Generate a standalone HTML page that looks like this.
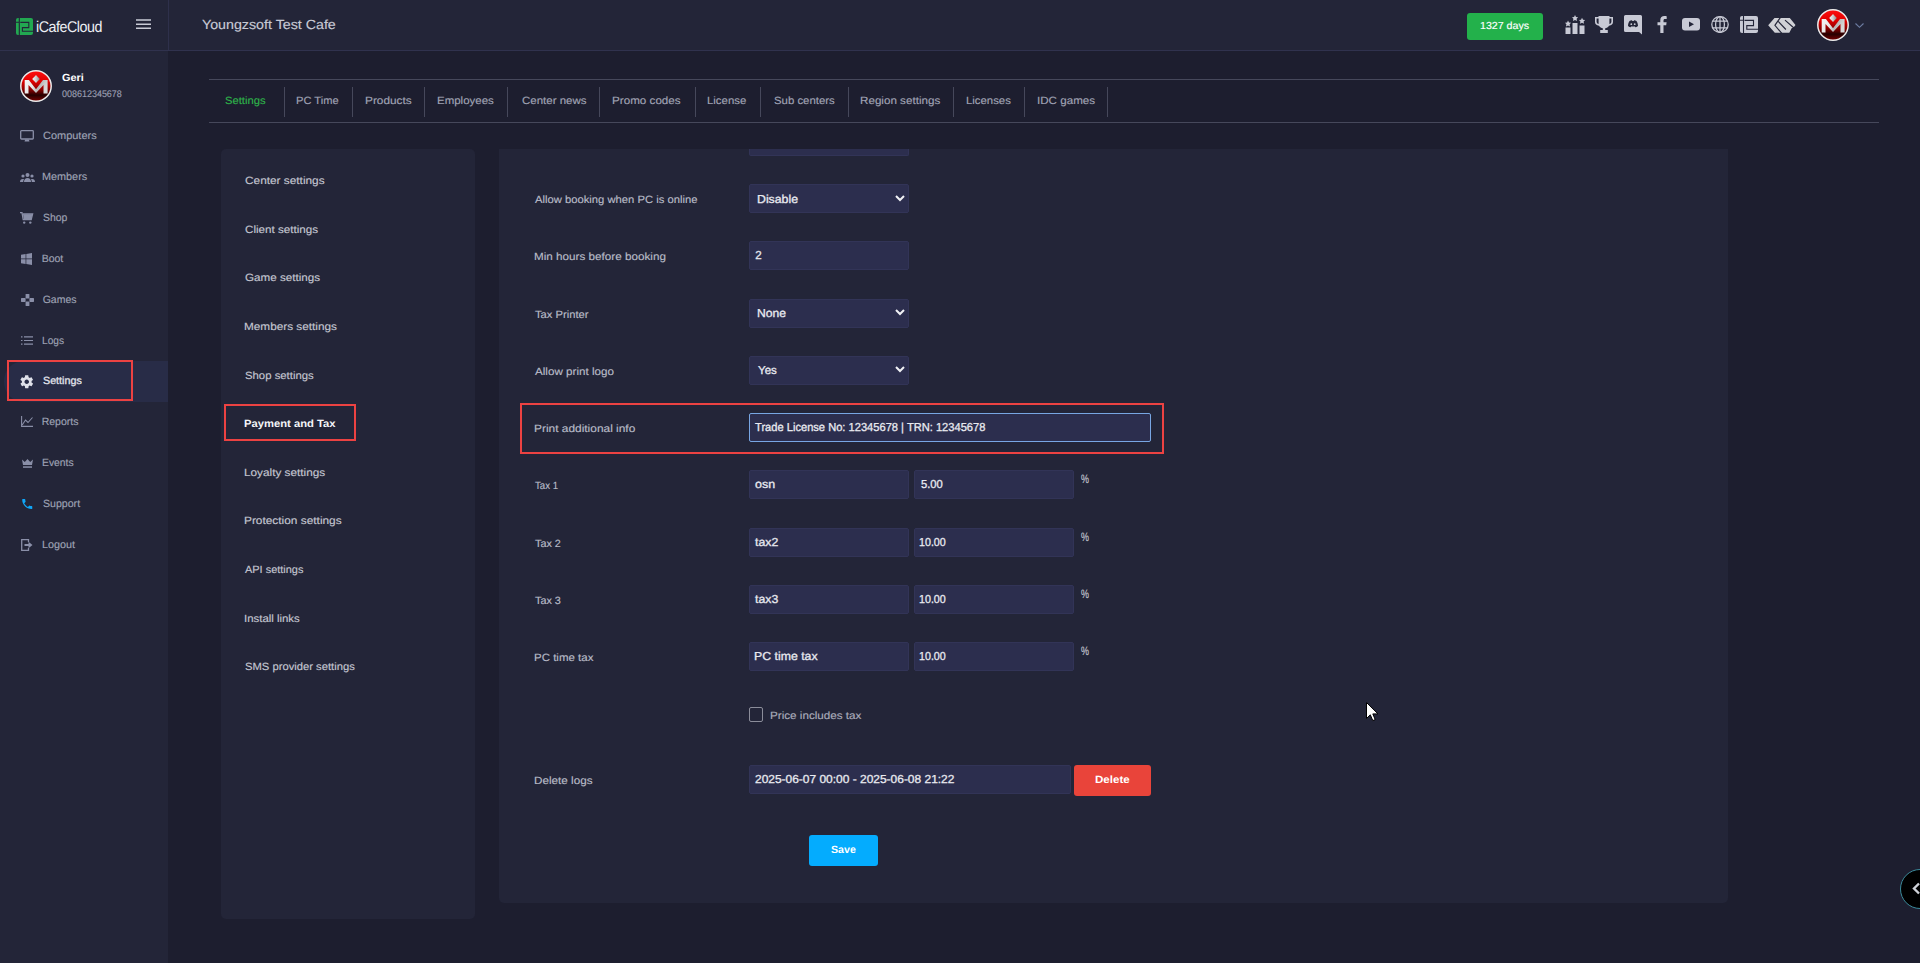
<!DOCTYPE html>
<html><head><meta charset="utf-8"><title>iCafeCloud</title>
<style>
html,body{margin:0;padding:0}
body{width:1920px;height:963px;overflow:hidden;background:#1d1e2f;position:relative;font-family:"Liberation Sans",sans-serif;text-rendering:geometricPrecision}
.a{position:absolute}
.t{position:absolute;white-space:pre;line-height:20px;transform-origin:0 0}
.hdr{left:0;top:0;width:1920px;height:50px;background:#232538;border-bottom:1px solid #30324e}
.vline{left:168px;top:0;width:1px;height:50px;background:#2e304b}
.side{left:0;top:51px;width:168px;height:912px;background:#232538}
.tl{height:1px;background:#46485b}
.ts{width:1px;top:87px;height:30px;background:#46485b}
.card{background:#232538;border-radius:5px}
.inp{background:#2c2e4e;border:1px solid #323457;box-sizing:border-box;border-radius:2px}
.red{border:2px solid #ec4242;box-sizing:border-box}
svg{position:absolute;overflow:visible}
</style></head><body>
<!-- header -->
<div class="a hdr"></div>
<div class="a vline"></div>
<svg style="left:16px;top:18px" width="17" height="17" viewBox="0 0 17 17">
 <rect x="0" y="0" width="17" height="17" rx="2" fill="#22a851"/>
 <path d="M3.3 0V17M0 4.3H3.3M4.3 4.4H12.8V9.6H6.4V13.2H17" stroke="#232538" stroke-width="1.1" fill="none"/>
</svg>
<div class="t" style="left:35.5px;top:17.5px;font-size:15.5px;color:#eef0f4;transform:scaleX(0.92);letter-spacing:-0.5px">iCafeCloud</div>
<svg style="left:136px;top:19px" width="15" height="11" viewBox="0 0 15 11">
 <path d="M0 1H15M0 5.3H15M0 9.3H15" stroke="#c9cbd6" stroke-width="1.6"/>
</svg>
<div class="a" style="left:1467px;top:13px;width:76px;height:27px;background:#23b14b;border-radius:3px"></div>
<!-- header icons -->
<svg style="left:1565px;top:15px" width="20" height="19" viewBox="0 0 20 19">
 <g fill="#c8cad5">
 <rect x="0.5" y="12.5" width="5" height="6.5"/><rect x="7.5" y="8" width="5" height="11"/><rect x="14.5" y="10.5" width="5" height="8.5"/>
 <path d="M3 5.5l1 2 2.1.3-1.5 1.5.4 2.1L3 10.4 1 11.4l.4-2.1L0 7.8l2.1-.3z"/>
 <path d="M10 0l1 2 2.1.3-1.5 1.5.4 2.1L10 4.9 8 5.9l.4-2.1L7 2.3l2.1-.3z"/>
 <path d="M17 2.8l1 2 2.1.3-1.5 1.5.4 2.1L17 7.7 15 8.7l.4-2.1L14 5.1l2.1-.3z"/>
 </g>
</svg>
<svg style="left:1595px;top:16px" width="18" height="17" viewBox="0 0 18 17">
 <path fill="#c8cad5" d="M3.5 0H14.5V1H18V6C18 8 16.5 9.5 14 9.8 13.2 11.2 11.5 12 10.2 12.2V14H12.8V17H5.2V14H7.8V12.2C6.5 12 4.8 11.2 4 9.8 1.5 9.5 0 8 0 6V1H3.5ZM1.6 2.6V5.8C1.6 7 2.5 7.8 3.6 8V2.6ZM16.4 2.6H14.4V8C15.5 7.8 16.4 7 16.4 5.8Z"/>
</svg>
<svg style="left:1624px;top:15px" width="18" height="20" viewBox="0 0 18 20">
 <path fill="#c8cad5" d="M1.5 0H16.5A1.5 1.5 0 0 1 18 1.5V19.5L15 17H1.5A1.5 1.5 0 0 1 0 15.5V1.5A1.5 1.5 0 0 1 1.5 0Z"/>
 <path fill="#232538" d="M5.5 6C6.8 5.2 7.8 5.1 8 5.4L8.3 5.9H9.7L10 5.4C10.2 5.1 11.2 5.2 12.5 6 13.6 7.6 14 9.3 14 11 13 11.8 12 12.2 11.2 12.3L10.7 11.5C11 11.4 11.3 11.2 11.6 11 10 11.7 8 11.7 6.4 11 6.7 11.2 7 11.4 7.3 11.5L6.8 12.3C6 12.2 5 11.8 4 11 4 9.3 4.4 7.6 5.5 6Z"/>
 <circle cx="7.3" cy="9.2" r="0.9" fill="#c8cad5"/><circle cx="10.7" cy="9.2" r="0.9" fill="#c8cad5"/>
</svg>
<svg style="left:1657px;top:16px" width="10" height="17" viewBox="0 0 10 17">
 <path fill="#c8cad5" d="M6.5 17V9.3H9.2L9.6 6.3H6.5V4.4C6.5 3.5 6.8 2.9 8 2.9H9.7V0.2C9.4 0.1 8.4 0 7.3 0 4.9 0 3.3 1.4 3.3 4.1V6.3H0.5V9.3H3.3V17Z"/>
</svg>
<svg style="left:1682px;top:18px" width="18" height="13" viewBox="0 0 18 13">
 <rect x="0" y="0" width="18" height="12.5" rx="3" fill="#c8cad5"/>
 <path d="M7 3.5L12 6.25 7 9Z" fill="#232538"/>
</svg>
<svg style="left:1711px;top:16px" width="18" height="17" viewBox="0 0 18 17">
 <g fill="none" stroke="#c8cad5" stroke-width="1.25">
 <ellipse cx="9" cy="8.5" rx="8.2" ry="7.9"/>
 <ellipse cx="9" cy="8.5" rx="4.4" ry="7.9"/>
 <path d="M1.8 5.2H16.2M1.8 11.8H16.2M9 0.6V16.4"/>
 </g>
</svg>
<svg style="left:1740px;top:16px" width="18" height="17" viewBox="0 0 18 17">
 <rect x="0" y="0" width="18" height="17" rx="2" fill="#c8cad5"/>
 <path d="M3.5 0V17M0 4.3H3.5M4.5 4.4H13.5V9.6H6.8V13.2H18" stroke="#232538" stroke-width="1.1" fill="none"/>
</svg>
<svg style="left:1764px;top:13px" width="36" height="24" viewBox="0 0 36 24">
 <path fill="#d0d1d6" d="M4.2 12.3L10.5 5H25.8L31.5 12 29.2 14.9H27.8L25.3 19.8H10.8Z"/>
 <path d="M16.3 4.6L10.9 12.3 17.8 20.4M14.2 8.3L21.9 16.5M21 7.1L30.2 15.3" stroke="#232538" stroke-width="1.15" fill="none"/>
</svg>
<svg style="left:1817px;top:9px" width="32" height="32" viewBox="0 0 32 32">
 <defs><linearGradient id="rg" x1="0" y1="0" x2="0" y2="1"><stop offset="0" stop-color="#ff1010"/><stop offset="0.35" stop-color="#e00000"/><stop offset="0.62" stop-color="#8a0000"/><stop offset="0.8" stop-color="#250000"/><stop offset="1" stop-color="#7a0000"/></linearGradient>
 <linearGradient id="mg" x1="0" y1="0" x2="1" y2="0.3"><stop offset="0" stop-color="#f4f4f4"/><stop offset="0.45" stop-color="#e8e8e8"/><stop offset="0.7" stop-color="#b8b8b8"/><stop offset="1" stop-color="#d8d8d8"/></linearGradient><linearGradient id="dg" x1="0" y1="0" x2="1" y2="0"><stop offset="0" stop-color="#f6f6f6"/><stop offset="0.5" stop-color="#d0d0d0"/><stop offset="1" stop-color="#888"/></linearGradient></defs>
 <circle cx="16" cy="16" r="15.2" fill="url(#rg)" stroke="#ececec" stroke-width="1.5"/>
 <path d="M4.7 10.1H8.9L16 19.3 23 10.1H27.6V23.6H23.5V15.1L16 23 8.5 15.1V23.6H4.7Z" fill="url(#mg)"/>
 <path d="M16 5L19.8 9 16 13.1 12.2 9Z" fill="url(#dg)"/>
</svg>
<svg style="left:1855px;top:23px" width="9" height="5" viewBox="0 0 9 5">
 <path d="M0.5 0.5L4.5 4.3 8.5 0.5" stroke="#6e7ea3" stroke-width="1.1" fill="none"/>
</svg>

<!-- sidebar -->
<div class="a side"></div>
<svg style="left:20px;top:70px" width="32" height="32" viewBox="0 0 32 32">
 <circle cx="16" cy="16" r="15.2" fill="url(#rg)" stroke="#ececec" stroke-width="1.5"/>
 <path d="M4.7 10.1H8.9L16 19.3 23 10.1H27.6V23.6H23.5V15.1L16 23 8.5 15.1V23.6H4.7Z" fill="url(#mg)"/>
 <path d="M16 5L19.8 9 16 13.1 12.2 9Z" fill="url(#dg)"/>
</svg>
<div class="a" style="left:4px;top:361px;width:164px;height:41px;background:#282c47;border-radius:20px 0 0 20px"></div>
<div class="a red" style="left:7px;top:360px;width:126px;height:41px"></div>
<!-- sidebar icons -->
<svg style="left:20px;top:130px" width="14" height="12" viewBox="0 0 14 12">
 <rect x="0.7" y="0.7" width="12.6" height="8.3" rx="0.8" fill="none" stroke="#8a8fa8" stroke-width="1.3"/>
 <path d="M5.2 9.5H8.8L9.5 11.5H4.5Z" fill="#8a8fa8"/>
</svg>
<svg style="left:20px;top:173px" width="15" height="9" viewBox="0 0 15 9">
 <g fill="#8a8fa8"><circle cx="7.5" cy="2" r="2"/><circle cx="3" cy="3" r="1.6"/><circle cx="12" cy="3" r="1.6"/>
 <path d="M4 9C4 6.5 5.5 5 7.5 5S11 6.5 11 9Z"/><path d="M0 9C0 7.2 1 6 2.8 6 3.4 6 3.8 6.2 4 6.3 3.5 7 3.2 8 3.2 9Z"/><path d="M15 9C15 7.2 14 6 12.2 6 11.6 6 11.2 6.2 11 6.3 11.5 7 11.8 8 11.8 9Z"/></g>
</svg>
<svg style="left:20px;top:212px" width="13" height="12" viewBox="0 0 13 12">
 <path d="M0 0.6H2L3.2 7.6H11.2L12.6 2H3" stroke="#8a8fa8" stroke-width="1.3" fill="none"/>
 <path d="M3 2.2H12.5L11.2 7H3.8Z" fill="#8a8fa8"/>
 <circle cx="4.2" cy="10.6" r="1.2" fill="#8a8fa8"/><circle cx="10.3" cy="10.6" r="1.2" fill="#8a8fa8"/>
</svg>
<svg style="left:21px;top:253px" width="11" height="12" viewBox="0 0 11 12">
 <path fill="#8a8fa8" d="M0 1.8L4.6 1.1V5.6H0ZM5.3 1L11 0V5.6H5.3ZM0 6.3H4.6V10.9L0 10.2ZM5.3 6.3H11V12L5.3 11Z"/>
</svg>
<svg style="left:21px;top:294px" width="13" height="12" viewBox="0 0 13 12">
 <g fill="#8a8fa8"><rect x="4.6" y="0" width="3.8" height="4.5" rx="0.6"/><rect x="4.6" y="7.5" width="3.8" height="4.5" rx="0.6"/><rect x="0" y="4.1" width="4.6" height="3.8" rx="0.6"/><rect x="8.4" y="4.1" width="4.6" height="3.8" rx="0.6"/></g>
</svg>
<svg style="left:21px;top:336px" width="12" height="9" viewBox="0 0 12 9">
 <g stroke="#8a8fa8" stroke-width="1.2"><path d="M0 0.8H1.5M3 0.8H12M0 4.5H1.5M3 4.5H12M0 8.2H1.5M3 8.2H12"/></g>
</svg>
<svg style="left:19.3px;top:373.5px" width="15.5" height="15.5" viewBox="0 0 24 24">
 <path fill="#dfe1ea" d="M19.4 13c.04-.3.1-.65.1-1s-.03-.7-.1-1l2.1-1.65c.2-.15.25-.42.12-.64l-2-3.46c-.12-.22-.4-.3-.6-.22l-2.5 1c-.5-.4-1.1-.7-1.7-1l-.4-2.65c0-.24-.25-.42-.5-.42h-4c-.25 0-.46.18-.5.42l-.37 2.65c-.6.25-1.17.6-1.7 1l-2.5-1c-.22-.08-.48 0-.6.22l-2 3.46c-.13.22-.07.5.12.64L4.57 11c-.04.3-.07.65-.07 1s.03.7.07 1l-2.1 1.65c-.2.15-.25.42-.12.64l2 3.46c.12.22.4.3.6.22l2.5-1c.5.4 1.1.7 1.7 1l.37 2.65c.04.24.25.42.5.42h4c.25 0 .46-.18.5-.42l.37-2.65c.6-.25 1.17-.6 1.7-1l2.5 1c.22.08.48 0 .6-.22l2-3.46c.12-.22.07-.5-.12-.64L19.4 13zM12 15.5c-1.93 0-3.5-1.57-3.5-3.5s1.57-3.5 3.5-3.5 3.5 1.57 3.5 3.5-1.57 3.5-3.5 3.5z"/>
</svg>
<svg style="left:21px;top:416px" width="12" height="11" viewBox="0 0 12 11">
 <path d="M0.6 0V10.4H12M1.2 9L4.5 4 7 6.5 11.5 1.5" stroke="#8a8fa8" stroke-width="1.1" fill="none"/>
</svg>
<svg style="left:21.5px;top:459px" width="11" height="9" viewBox="0 0 11 9">
 <path fill="#8a8fa8" d="M0 0.5L2.8 3 5.5 0 8.2 3 11 0.5 10 6H1Z"/><rect x="1" y="7.3" width="9" height="1.5" fill="#8a8fa8"/>
</svg>
<svg style="left:20.5px;top:497.5px" width="12.5" height="12" viewBox="0 0 24 24">
 <path fill="#10a6f7" d="M6.6 10.8c1.4 2.8 3.8 5.1 6.6 6.6l2.2-2.2c.3-.3.7-.4 1-.2 1.1.4 2.3.6 3.6.6.6 0 1 .4 1 1V20c0 .6-.4 1-1 1C10.6 21 3 13.4 3 4c0-.6.4-1 1-1h3.5c.6 0 1 .4 1 1 0 1.3.2 2.5.6 3.6.1.3 0 .7-.2 1z" transform="translate(-1.5 -1.5) scale(1.12)"/>
</svg>
<svg style="left:21px;top:539px" width="12" height="12" viewBox="0 0 12 12">
 <path d="M7.5 3V0.7H0.7V11.3H7.5V9" stroke="#8a8fa8" stroke-width="1.3" fill="none"/>
 <path fill="#8a8fa8" d="M3.5 5H7.5V2.8L11.5 6 7.5 9.2V7H3.5Z"/>
</svg>

<!-- tabs -->
<div class="a tl" style="left:209px;top:79px;width:1670px"></div>
<div class="a tl" style="left:209px;top:122px;width:1670px"></div>
<div class="a ts" style="left:284px"></div>
<div class="a ts" style="left:352px"></div>
<div class="a ts" style="left:424px"></div>
<div class="a ts" style="left:507px"></div>
<div class="a ts" style="left:599px"></div>
<div class="a ts" style="left:695px"></div>
<div class="a ts" style="left:760px"></div>
<div class="a ts" style="left:848px"></div>
<div class="a ts" style="left:953px"></div>
<div class="a ts" style="left:1024px"></div>
<div class="a ts" style="left:1107px"></div>

<!-- left card -->
<div class="a card" style="left:221px;top:149px;width:254px;height:770px"></div>
<div class="a red" style="left:224px;top:404px;width:132px;height:37px"></div>

<!-- right card -->
<div class="a card" style="left:499px;top:149px;width:1229px;height:754px;border-radius:0 0 5px 5px"></div>
<div class="a inp" style="left:749px;top:149px;width:160px;height:7px;border-top:none;border-radius:0 0 2px 2px"></div>
<div class="a inp" style="left:749px;top:184px;width:160px;height:29px"></div>
<div class="a inp" style="left:749px;top:241px;width:160px;height:29px"></div>
<div class="a inp" style="left:749px;top:299px;width:160px;height:29px"></div>
<div class="a inp" style="left:749px;top:356px;width:160px;height:29px"></div>
<svg style="left:895px;top:195px" width="10" height="7" viewBox="0 0 10 7"><path d="M1 1L5 5 9 1" stroke="#f0f1f5" stroke-width="2" fill="none"/></svg>
<svg style="left:895px;top:309px" width="10" height="7" viewBox="0 0 10 7"><path d="M1 1L5 5 9 1" stroke="#f0f1f5" stroke-width="2" fill="none"/></svg>
<svg style="left:895px;top:366px" width="10" height="7" viewBox="0 0 10 7"><path d="M1 1L5 5 9 1" stroke="#f0f1f5" stroke-width="2" fill="none"/></svg>
<div class="a red" style="left:520px;top:403px;width:644px;height:51px"></div>
<div class="a inp" style="left:749px;top:413px;width:402px;height:29px;border:1px solid #78a6e3"></div>
<div class="a inp" style="left:749px;top:470px;width:160px;height:29px"></div>
<div class="a inp" style="left:914px;top:470px;width:160px;height:29px"></div>
<div class="a inp" style="left:749px;top:528px;width:160px;height:29px"></div>
<div class="a inp" style="left:914px;top:528px;width:160px;height:29px"></div>
<div class="a inp" style="left:749px;top:585px;width:160px;height:29px"></div>
<div class="a inp" style="left:914px;top:585px;width:160px;height:29px"></div>
<div class="a inp" style="left:749px;top:642px;width:160px;height:29px"></div>
<div class="a inp" style="left:914px;top:642px;width:160px;height:29px"></div>
<div class="a" style="left:749px;top:707px;width:14px;height:15px;border:1px solid #8b8d9a;box-sizing:border-box;border-radius:2px"></div>
<div class="a inp" style="left:749px;top:765px;width:322px;height:29px"></div>
<div class="a" style="left:1074px;top:765px;width:77px;height:31px;background:#e9443a;border-radius:3px"></div>
<div class="a" style="left:809px;top:835px;width:69px;height:31px;background:#04acfe;border-radius:3px"></div>

<!-- cursor -->
<svg style="left:1366px;top:702px" width="13" height="20" viewBox="0 0 13 20">
 <path d="M0.5 0.5V16.5L4.3 12.8 6.8 18.6 9.2 17.6 6.8 11.9H12Z" fill="#fff" stroke="#000" stroke-width="1"/>
</svg>
<!-- right floating button -->
<div class="a" style="left:1900px;top:869px;width:40px;height:40px;border-radius:50%;background:#000;border:1px solid #3b8a9a;box-sizing:border-box"></div>
<svg style="left:1911px;top:882px" width="10" height="13" viewBox="0 0 10 13"><path d="M8 1.5L3 6.5 8 11.5" stroke="#d0d2d8" stroke-width="2.4" fill="none"/></svg>

<div class='t' style='left:201.50px;top:15px;font-size:13.2px;color:#c8cad5;-webkit-text-stroke:0.15px currentColor;transform:scaleX(1.0797);'>Youngzsoft Test Cafe</div>
<div class='t' style='left:1479.96px;top:17px;font-size:10.2px;color:#ffffff;-webkit-text-stroke:0.15px currentColor;transform:scaleX(1.0435);'>1327 days</div>
<div class='t' style='left:62.00px;top:69px;font-size:10.4px;color:#ffffff;font-weight:700;transform:scaleX(1.0500);'>Geri</div>
<div class='t' style='left:62.20px;top:85px;font-size:9.6px;color:#9a9db0;-webkit-text-stroke:0.15px currentColor;transform:scaleX(0.9344);'>008612345678</div>
<div class='t' style='left:42.70px;top:126px;font-size:10.5px;color:#9ea2b4;-webkit-text-stroke:0.15px currentColor;transform:scaleX(1.0451);'>Computers</div>
<div class='t' style='left:41.67px;top:167px;font-size:10.5px;color:#9ea2b4;-webkit-text-stroke:0.15px currentColor;transform:scaleX(1.0326);'>Members</div>
<div class='t' style='left:42.70px;top:208px;font-size:10.5px;color:#9ea2b4;-webkit-text-stroke:0.15px currentColor;transform:scaleX(0.9917);'>Shop</div>
<div class='t' style='left:41.70px;top:249px;font-size:10.5px;color:#9ea2b4;-webkit-text-stroke:0.15px currentColor;'>Boot</div>
<div class='t' style='left:42.70px;top:290px;font-size:10.5px;color:#9ea2b4;-webkit-text-stroke:0.15px currentColor;'>Games</div>
<div class='t' style='left:41.73px;top:331px;font-size:10.5px;color:#9ea2b4;-webkit-text-stroke:0.15px currentColor;transform:scaleX(0.9682);'>Logs</div>
<div class='t' style='left:42.70px;top:371px;font-size:10.5px;color:#e2e4ec;-webkit-text-stroke:0.3px currentColor;transform:scaleX(1.0211);'>Settings</div>
<div class='t' style='left:41.70px;top:412px;font-size:10.5px;color:#9ea2b4;-webkit-text-stroke:0.15px currentColor;'>Reports</div>
<div class='t' style='left:41.71px;top:453px;font-size:10.5px;color:#9ea2b4;-webkit-text-stroke:0.15px currentColor;transform:scaleX(0.9871);'>Events</div>
<div class='t' style='left:42.70px;top:494px;font-size:10.5px;color:#9ea2b4;-webkit-text-stroke:0.15px currentColor;transform:scaleX(1.0081);'>Support</div>
<div class='t' style='left:41.67px;top:535px;font-size:10.5px;color:#9ea2b4;-webkit-text-stroke:0.15px currentColor;transform:scaleX(1.0290);'>Logout</div>
<div class='t' style='left:225.20px;top:91px;font-size:10.5px;color:#2eb24a;-webkit-text-stroke:0.15px currentColor;transform:scaleX(1.0684);'>Settings</div>
<div class='t' style='left:296.44px;top:91px;font-size:10.5px;color:#a0a3b4;-webkit-text-stroke:0.15px currentColor;transform:scaleX(1.0590);'>PC Time</div>
<div class='t' style='left:364.68px;top:91px;font-size:10.5px;color:#a0a3b4;-webkit-text-stroke:0.15px currentColor;transform:scaleX(1.1250);'>Products</div>
<div class='t' style='left:437.31px;top:91px;font-size:10.5px;color:#a0a3b4;-webkit-text-stroke:0.15px currentColor;transform:scaleX(1.0941);'>Employees</div>
<div class='t' style='left:521.50px;top:91px;font-size:10.5px;color:#a0a3b4;-webkit-text-stroke:0.15px currentColor;transform:scaleX(1.0949);'>Center news</div>
<div class='t' style='left:612.19px;top:91px;font-size:10.5px;color:#a0a3b4;-webkit-text-stroke:0.15px currentColor;transform:scaleX(1.1098);'>Promo codes</div>
<div class='t' style='left:707.31px;top:91px;font-size:10.5px;color:#a0a3b4;-webkit-text-stroke:0.15px currentColor;transform:scaleX(1.0857);'>License</div>
<div class='t' style='left:773.70px;top:91px;font-size:10.5px;color:#a0a3b4;-webkit-text-stroke:0.15px currentColor;transform:scaleX(1.0839);'>Sub centers</div>
<div class='t' style='left:860.39px;top:91px;font-size:10.5px;color:#a0a3b4;-webkit-text-stroke:0.15px currentColor;transform:scaleX(1.1085);'>Region settings</div>
<div class='t' style='left:966.32px;top:91px;font-size:10.5px;color:#a0a3b4;-webkit-text-stroke:0.15px currentColor;transform:scaleX(1.0825);'>Licenses</div>
<div class='t' style='left:1036.59px;top:91px;font-size:10.5px;color:#a0a3b4;-webkit-text-stroke:0.15px currentColor;transform:scaleX(1.1059);'>IDC games</div>
<div class='t' style='left:244.90px;top:171px;font-size:10.5px;color:#c4c6d1;-webkit-text-stroke:0.15px currentColor;transform:scaleX(1.1271);'>Center settings</div>
<div class='t' style='left:244.90px;top:220px;font-size:10.5px;color:#c4c6d1;-webkit-text-stroke:0.15px currentColor;transform:scaleX(1.1076);'>Client settings</div>
<div class='t' style='left:244.90px;top:268px;font-size:10.5px;color:#c4c6d1;-webkit-text-stroke:0.15px currentColor;transform:scaleX(1.1088);'>Game settings</div>
<div class='t' style='left:243.78px;top:317px;font-size:10.5px;color:#c4c6d1;-webkit-text-stroke:0.15px currentColor;transform:scaleX(1.1220);'>Members settings</div>
<div class='t' style='left:244.90px;top:366px;font-size:10.5px;color:#c4c6d1;-webkit-text-stroke:0.15px currentColor;transform:scaleX(1.0797);'>Shop settings</div>
<div class='t' style='left:243.83px;top:414px;font-size:10.5px;color:#f4f5f8;font-weight:700;transform:scaleX(1.0702);'>Payment and Tax</div>
<div class='t' style='left:243.78px;top:463px;font-size:10.5px;color:#c4c6d1;-webkit-text-stroke:0.15px currentColor;transform:scaleX(1.1211);'>Loyalty settings</div>
<div class='t' style='left:243.77px;top:511px;font-size:10.5px;color:#c4c6d1;-webkit-text-stroke:0.15px currentColor;transform:scaleX(1.1306);'>Protection settings</div>
<div class='t' style='left:244.90px;top:560px;font-size:10.5px;color:#c4c6d1;-webkit-text-stroke:0.15px currentColor;transform:scaleX(1.0429);'>API settings</div>
<div class='t' style='left:243.81px;top:609px;font-size:10.5px;color:#c4c6d1;-webkit-text-stroke:0.15px currentColor;transform:scaleX(1.0860);'>Install links</div>
<div class='t' style='left:244.90px;top:657px;font-size:10.5px;color:#c4c6d1;-webkit-text-stroke:0.15px currentColor;transform:scaleX(1.0689);'>SMS provider settings</div>
<div class='t' style='left:535.30px;top:190px;font-size:10.5px;color:#b8bbc7;-webkit-text-stroke:0.15px currentColor;transform:scaleX(1.0704);'>Allow booking when PC is online</div>
<div class='t' style='left:534.19px;top:247px;font-size:10.5px;color:#b8bbc7;-webkit-text-stroke:0.15px currentColor;transform:scaleX(1.1137);'>Min hours before booking</div>
<div class='t' style='left:535.30px;top:305px;font-size:10.5px;color:#b8bbc7;-webkit-text-stroke:0.15px currentColor;transform:scaleX(1.0660);'>Tax Printer</div>
<div class='t' style='left:535.30px;top:362px;font-size:10.5px;color:#b8bbc7;-webkit-text-stroke:0.15px currentColor;transform:scaleX(1.1085);'>Allow print logo</div>
<div class='t' style='left:534.17px;top:419px;font-size:10.5px;color:#b8bbc7;-webkit-text-stroke:0.15px currentColor;transform:scaleX(1.1341);'>Print additional info</div>
<div class='t' style='left:535.30px;top:476px;font-size:10.5px;color:#b8bbc7;-webkit-text-stroke:0.15px currentColor;transform:scaleX(0.9160);'>Tax 1</div>
<div class='t' style='left:535.30px;top:534px;font-size:10.5px;color:#b8bbc7;-webkit-text-stroke:0.15px currentColor;transform:scaleX(1.0320);'>Tax 2</div>
<div class='t' style='left:535.30px;top:591px;font-size:10.5px;color:#b8bbc7;-webkit-text-stroke:0.15px currentColor;transform:scaleX(1.0320);'>Tax 3</div>
<div class='t' style='left:534.21px;top:648px;font-size:10.5px;color:#b8bbc7;-webkit-text-stroke:0.15px currentColor;transform:scaleX(1.0943);'>PC time tax</div>
<div class='t' style='left:534.18px;top:771px;font-size:10.5px;color:#b8bbc7;-webkit-text-stroke:0.15px currentColor;transform:scaleX(1.1157);'>Delete logs</div>
<div class='t' style='left:757.14px;top:190px;font-size:11.6px;color:#e9eaf0;-webkit-text-stroke:0.3px currentColor;transform:scaleX(1.0605);'>Disable</div>
<div class='t' style='left:755.20px;top:246px;font-size:11.6px;color:#e9eaf0;-webkit-text-stroke:0.3px currentColor;'>2</div>
<div class='t' style='left:757.15px;top:304px;font-size:11.6px;color:#e9eaf0;-webkit-text-stroke:0.3px currentColor;transform:scaleX(1.0481);'>None</div>
<div class='t' style='left:758.20px;top:361px;font-size:11.6px;color:#e9eaf0;-webkit-text-stroke:0.3px currentColor;transform:scaleX(0.9947);'>Yes</div>
<div class='t' style='left:755.20px;top:418px;font-size:11.6px;color:#e9eaf0;-webkit-text-stroke:0.3px currentColor;transform:scaleX(0.9592);'>Trade License No: 12345678 | TRN: 12345678</div>
<div class='t' style='left:755.20px;top:475px;font-size:11.6px;color:#e9eaf0;-webkit-text-stroke:0.3px currentColor;transform:scaleX(1.0778);'>osn</div>
<div class='t' style='left:921.20px;top:475px;font-size:11.6px;color:#e9eaf0;-webkit-text-stroke:0.3px currentColor;transform:scaleX(0.9636);'>5.00</div>
<div class='t' style='left:755.20px;top:533px;font-size:11.6px;color:#e9eaf0;-webkit-text-stroke:0.3px currentColor;transform:scaleX(1.0591);'>tax2</div>
<div class='t' style='left:919.28px;top:533px;font-size:11.6px;color:#e9eaf0;-webkit-text-stroke:0.3px currentColor;transform:scaleX(0.9214);'>10.00</div>
<div class='t' style='left:755.20px;top:590px;font-size:11.6px;color:#e9eaf0;-webkit-text-stroke:0.3px currentColor;transform:scaleX(1.0591);'>tax3</div>
<div class='t' style='left:919.28px;top:590px;font-size:11.6px;color:#e9eaf0;-webkit-text-stroke:0.3px currentColor;transform:scaleX(0.9214);'>10.00</div>
<div class='t' style='left:754.14px;top:647px;font-size:11.6px;color:#e9eaf0;-webkit-text-stroke:0.3px currentColor;transform:scaleX(1.0610);'>PC time tax</div>
<div class='t' style='left:919.28px;top:647px;font-size:11.6px;color:#e9eaf0;-webkit-text-stroke:0.3px currentColor;transform:scaleX(0.9214);'>10.00</div>
<div class='t' style='left:1081.00px;top:469px;font-size:12.3px;color:#c5c7d3;-webkit-text-stroke:0.15px currentColor;transform:scaleX(0.7273);'>%</div>
<div class='t' style='left:1081.00px;top:527px;font-size:12.3px;color:#c5c7d3;-webkit-text-stroke:0.15px currentColor;transform:scaleX(0.7273);'>%</div>
<div class='t' style='left:1081.00px;top:584px;font-size:12.3px;color:#c5c7d3;-webkit-text-stroke:0.15px currentColor;transform:scaleX(0.7273);'>%</div>
<div class='t' style='left:1081.00px;top:641px;font-size:12.3px;color:#c5c7d3;-webkit-text-stroke:0.15px currentColor;transform:scaleX(0.7273);'>%</div>
<div class='t' style='left:769.69px;top:706px;font-size:10.5px;color:#a9abba;-webkit-text-stroke:0.15px currentColor;transform:scaleX(1.1111);'>Price includes tax</div>
<div class='t' style='left:755.20px;top:770px;font-size:11.6px;color:#e9eaf0;-webkit-text-stroke:0.3px currentColor;transform:scaleX(1.0311);'>2025-06-07 00:00 - 2025-06-08 21:22</div>
<div class='t' style='left:1094.60px;top:770px;font-size:10.5px;color:#ffffff;font-weight:700;transform:scaleX(1.1033);'>Delete</div>
<div class='t' style='left:831.00px;top:840px;font-size:10.5px;color:#ffffff;font-weight:700;transform:scaleX(1.0125);'>Save</div>
</body></html>
